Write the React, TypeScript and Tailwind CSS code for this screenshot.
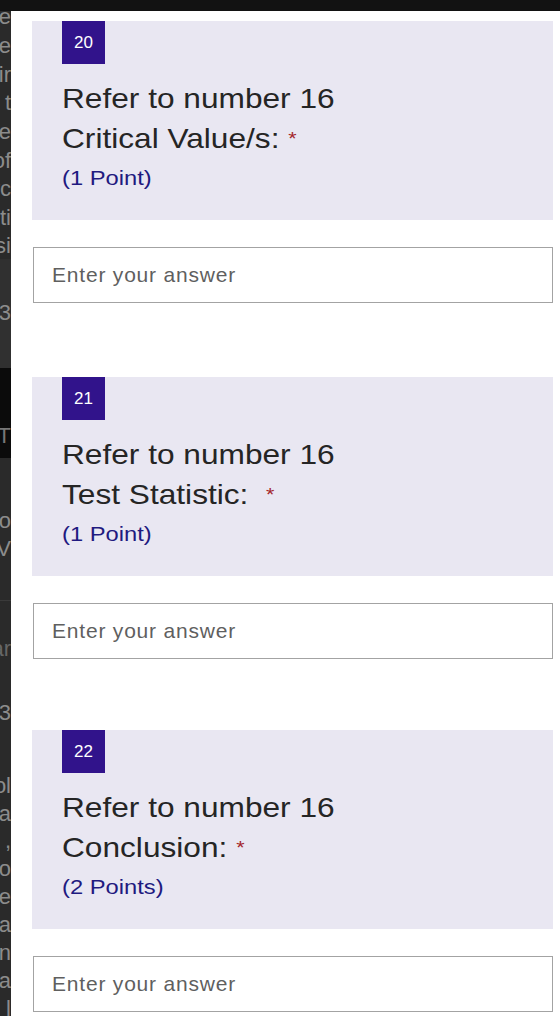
const stripRows: { h: string; text: string; cls: string }[] = [
  { h: 'h-[29px] mt-[-9px]', text: 'le', cls: '' },
  { h: 'h-[29px]', text: 're', cls: '' },
  { h: 'h-[28px]', text: 'ir', cls: '' },
  { h: 'h-[29px]', text: 't', cls: '' },
  { h: 'h-[29px]', text: 're', cls: '' },
  { h: 'h-[28px]', text: 'of', cls: '' },
  { h: 'h-[29px]', text: 'rc', cls: '' },
  { h: 'h-[28px]', text: 'ti', cls: '' },
  { h: 'h-[28px]', text: 'si', cls: '' },
  { h: 'h-[39px]', text: '', cls: 'bg-[#303030]' },
  { h: 'h-[28px]', text: '3', cls: 'bg-[#303030]' },
  { h: 'h-[42px]', text: '', cls: 'bg-[#303030]' },
  { h: 'h-[52px]', text: '', cls: 'bg-[#0b0b0b]' },
  { h: 'h-[30px]', text: 'T', cls: 'bg-[#0b0b0b] text-[15px] text-[#777]' },
  { h: 'h-[8px]', text: '', cls: 'bg-[#0b0b0b]' },
  { h: 'h-[48px]', text: '', cls: '' },
  { h: 'h-[28px]', text: 'o', cls: 'text-[16px]' },
  { h: 'h-[28px]', text: 'V', cls: '' },
  { h: 'h-[38px]', text: '', cls: '' },
  { h: 'h-[34px]', text: '', cls: 'border-t border-[#3a3a3a]' },
  { h: 'h-[28px]', text: 'ar', cls: 'text-[16px] text-[#666]' },
  { h: 'h-[36px]', text: '', cls: '' },
  { h: 'h-[28px]', text: '3', cls: '' },
  { h: 'h-[45px]', text: '', cls: '' },
  { h: 'h-[28px]', text: 'ol', cls: '' },
  { h: 'h-[28px]', text: 'a', cls: '' },
  { h: 'h-[27px]', text: "' ,", cls: '' },
  { h: 'h-[28px]', text: 'o', cls: '' },
  { h: 'h-[28px]', text: 'ne', cls: '' },
  { h: 'h-[29px]', text: 'ca', cls: '' },
  { h: 'h-[27px]', text: 'n', cls: '' },
  { h: 'h-[28px]', text: 'a', cls: '' },
  { h: 'h-[28px]', text: 'l', cls: '' },
];

const questions = [
  { num: 20, title: 'Critical Value/s:', gap: ' ', points: '(1 Point)', mt: '' },
  { num: 21, title: 'Test Statistic:', gap: '\u00a0 ', points: '(1 Point)', mt: 'mt-[74px]' },
  { num: 22, title: 'Conclusion:', gap: ' ', points: '(2 Points)', mt: 'mt-[71px]' },
];

function Question({ q }: { q: (typeof questions)[number] }) {
  return (
    <div className={q.mt}>
      <div className="h-[199px] bg-[#e9e7f2] pl-[30px]">
        <div className="flex h-[43px] w-[43px] items-center justify-center bg-[#31138b] text-[17px] text-white">
          {q.num}
        </div>
        <div className="mt-[15px] origin-left scale-x-[1.13] text-[28px] leading-[40px] text-[#252525]">
          <div>Refer to number 16</div>
          <div>
            {q.title}
            {q.gap}
            <span className="relative top-[-3px] text-[19px] text-[#a4262c]">*</span>
          </div>
          <div className="mt-[2px] text-[21px] leading-[28px] text-[#1f1a80]">{q.points}</div>
        </div>
      </div>
      <input
        type="text"
        placeholder="Enter your answer"
        className="mt-[27px] ml-px block h-[56px] w-[520px] border border-[#a3a3a3] bg-white pl-[18px] text-[21px] tracking-[0.8px] text-[#333] outline-none placeholder:text-[#5f5f5f]"
      />
    </div>
  );
}

export default function App() {
  return (
    <div
      className="flex h-[1016px] w-[560px] flex-col overflow-hidden bg-[#121212]"
      style={{ fontFamily: '"Liberation Sans", Arial, sans-serif' }}
    >
      <div className="h-[11px] shrink-0" />
      <div className="flex min-h-0 flex-1">
        {/* dimmed page behind the dialog */}
        <div className="flex w-[11px] shrink-0 flex-col overflow-hidden bg-[#2a2a2a]">
          {stripRows.map((r, i) => (
            <div
              key={i}
              className={`flex shrink-0 items-center justify-end whitespace-nowrap text-[22px] text-[#8c8c8c] ${r.h} ${r.cls}`}
            >
              {r.text}
            </div>
          ))}
        </div>

        <main className="flex-1 overflow-hidden bg-white pt-[10px] pl-[21px] pr-[7px]">
          {questions.map((q) => (
            <Question key={q.num} q={q} />
          ))}
        </main>
      </div>
    </div>
  );
}
